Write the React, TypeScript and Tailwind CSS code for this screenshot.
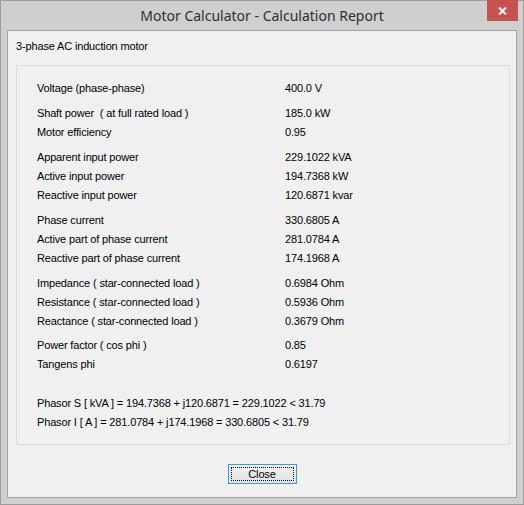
import React from 'react';

type Row = [string, string];

const groups: { rows: Row[]; gap: string }[] = [
  { rows: [['Voltage (phase-phase)', '400.0 V']], gap: 'mt-0' },
  {
    rows: [
      ['Shaft power  ( at full rated load )', '185.0 kW'],
      ['Motor efficiency', '0.95'],
    ],
    gap: 'mt-[6px]',
  },
  {
    rows: [
      ['Apparent input power', '229.1022 kVA'],
      ['Active input power', '194.7368 kW'],
      ['Reactive input power', '120.6871 kvar'],
    ],
    gap: 'mt-[6px]',
  },
  {
    rows: [
      ['Phase current', '330.6805 A'],
      ['Active part of phase current', '281.0784 A'],
      ['Reactive part of phase current', '174.1968 A'],
    ],
    gap: 'mt-[6px]',
  },
  {
    rows: [
      ['Impedance ( star-connected load )', '0.6984 Ohm'],
      ['Resistance ( star-connected load )', '0.5936 Ohm'],
      ['Reactance ( star-connected load )', '0.3679 Ohm'],
    ],
    gap: 'mt-[6px]',
  },
  {
    rows: [
      ['Power factor ( cos phi )', '0.85'],
      ['Tangens phi', '0.6197'],
    ],
    gap: 'mt-[5px]',
  },
];

export default function App() {
  return (
    <div
      className="w-[524px] h-[505px] bg-[#cfcfcf] border border-[#9c9c9c] flex flex-col text-black"
      style={{ fontFamily: '"Liberation Sans", Arial, sans-serif' }}
    >
      {/* title bar */}
      <div className="relative h-[29px] shrink-0 flex items-center justify-center">
        <span
          className="text-[14px] text-[#2e2e2e]"
          style={{ fontFamily: '"Noto Sans", "Open Sans", sans-serif' }}
        >
          Motor Calculator - Calculation Report
        </span>
        <div className="absolute -top-px right-[5px] w-[31px] h-[21px] bg-[#c75050] flex items-center justify-center">
          <svg width="9" height="8" viewBox="0 0 9 8">
            <path d="M1 0.5 L8 7.5 M8 0.5 L1 7.5" stroke="#fff" strokeWidth="2" />
          </svg>
        </div>
      </div>

      {/* client area */}
      <div className="flex-1 mx-[6px] mb-[6px] border border-[#a3a3a3] bg-[#f0f0f0] flex flex-col text-[11px] leading-[19px] tracking-[-0.15px]">
        <div className="pl-[8px] pt-[6px] h-[25px]">3-phase AC induction motor</div>

        <div className="ml-[8px] mr-[6px] mt-[9px] h-[380px] border border-[#dcdcdc] pl-[20px] pt-[13px]">
          {groups.map((g, i) => (
            <div key={i} className={g.gap}>
              {g.rows.map(([label, value]) => (
                <div key={label} className="flex h-[19px] whitespace-pre">
                  <span className="w-[248px] shrink-0">{label}</span>
                  <span>{value}</span>
                </div>
              ))}
            </div>
          ))}
          <div className="mt-[20px]">
            <div className="h-[19px]">Phasor S [ kVA ] = 194.7368 + j120.6871 = 229.1022 &lt; 31.79</div>
            <div className="h-[19px]">Phasor I [ A ] = 281.0784 + j174.1968 = 330.6805 &lt; 31.79</div>
          </div>
        </div>

        <div className="flex justify-center mt-[19px]">
          <button className="w-[69px] h-[20px] border border-[#3399ff] bg-gradient-to-b from-[#f2f2f2] to-[#e2e2e2] p-[2px]">
            <div className="w-full h-full border border-dotted border-black flex items-center justify-center text-[11px] leading-none">
              Close
            </div>
          </button>
        </div>
      </div>
    </div>
  );
}
